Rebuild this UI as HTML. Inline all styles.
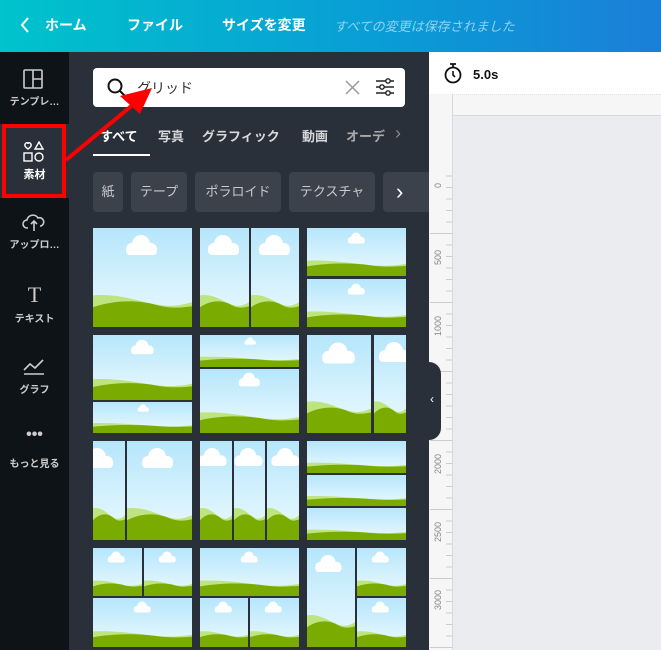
<!DOCTYPE html>
<html><head><meta charset="utf-8"><style>
*{margin:0;padding:0;box-sizing:border-box}
body{width:661px;height:650px;overflow:hidden;background:#ebecef;font-family:"Liberation Sans","Noto Sans CJK JP",sans-serif;position:relative}
.top{position:absolute;left:0;top:0;width:661px;height:52px;background:linear-gradient(90deg,#00c3cc,#0a9bd6 60%,#1b7fd8)}
.top span{position:absolute;top:15px;color:#fff;font-size:14px;font-weight:bold}
.side{position:absolute;left:0;top:52px;width:69px;height:598px;background:#0e1318}
.panel{position:absolute;left:69px;top:52px;width:360px;height:598px;background:#293039;overflow:hidden}
.si{position:absolute;left:0;width:69px;text-align:center;color:#fff;font-size:10px;font-weight:bold}
.a{position:absolute}
.t{position:absolute;top:126px;color:#d6d8db;font-size:13px;font-weight:bold}
.chip{position:absolute;top:172px;height:40px;background:#3b424c;border-radius:4px;color:#c7cacd;font-size:13px;line-height:40px;text-align:center}
svg.tile{position:absolute;display:block}
.rl{position:absolute;left:433px;font-size:9px;color:#888;writing-mode:vertical-rl;transform:rotate(180deg)}
</style></head><body>
<svg width="0" height="0" style="position:absolute"><defs>
<linearGradient id="sky" x1="0" y1="0" x2="0" y2="1"><stop offset="0" stop-color="#b6e6fb"/><stop offset="1" stop-color="#ecfaff"/></linearGradient>
<symbol id="land" viewBox="0 0 100 100" preserveAspectRatio="none">
<rect width="100" height="100" fill="url(#sky)"/>
<path d="M0 68 C30 66 50 76 70 78 C85 80 95 76 100 75 L100 100 L0 100Z" fill="#bde47e"/>
<path d="M0 80 C20 73 45 72 65 78 C80 82 92 80 100 79 L100 100 L0 100Z" fill="#7aab00"/>
</symbol>
<symbol id="cloud" viewBox="0 0 40 22"><circle cx="20" cy="10" r="9" fill="#fff"/><circle cx="11" cy="15" r="6" fill="#fff"/><circle cx="30" cy="15" r="6" fill="#fff"/><rect x="5" y="13" width="31" height="8" rx="4" fill="#fff"/></symbol>
</defs></svg>

<div class="top">
<svg class="a" style="left:20px;top:17px" width="10" height="16"><path d="M8 1L2 8l6 7" stroke="#fff" stroke-width="2" fill="none"/></svg>
<span style="left:45px">ホーム</span><span style="left:127px">ファイル</span><span style="left:222px">サイズを変更</span>
<span style="left:334px;font-weight:normal;color:#8fd3ee;font-style:italic;font-size:13px;top:16px">すべての変更は保存されました</span>
</div>

<div class="side"></div>
<div class="a" style="left:0;top:124px;width:69px;height:74px;background:#293039"></div>
<div class="panel"></div>

<svg class="a" style="left:23px;top:69px" width="20" height="20"><rect x="1" y="1" width="18" height="18" rx="1" fill="none" stroke="#ccc" stroke-width="1.6"/><path d="M10 1v18M10 10h9" stroke="#ccc" stroke-width="1.6"/></svg>
<div class="si" style="top:93px;color:#ccc">テンプレ…</div>
<svg class="a" style="left:22px;top:141px" width="24" height="22"><path d="M6 8C3 6 2 4 3.5 2.5 5 1 6 2 6 3 6 2 7 1 8.5 2.5 10 4 9 6 6 8Z" fill="none" stroke="#fff" stroke-width="1.4"/><path d="M17 1l4 7h-8z" fill="none" stroke="#fff" stroke-width="1.4"/><rect x="2" y="12" width="8" height="8" fill="none" stroke="#fff" stroke-width="1.4"/><circle cx="17" cy="16" r="4" fill="none" stroke="#fff" stroke-width="1.4"/></svg>
<div class="si" style="top:166px;font-size:11px">素材</div>
<div class="a" style="left:2px;top:124px;width:64px;height:74px;border:4px solid #f00"></div>
<svg class="a" style="left:22px;top:212px" width="24" height="20"><path d="M6 16H5a4 4 0 010-8 6 6 0 0111-2 4 4 0 013 8h-1M12 9v10M9 12l3-3 3 3" fill="none" stroke="#ccc" stroke-width="1.6"/></svg>
<div class="si" style="top:236px;color:#ccc">アップロ…</div>
<div class="si" style="top:282px;font-size:22px;font-weight:normal;font-family:'Liberation Serif',serif;color:#ccc">T</div>
<div class="si" style="top:310px;color:#ccc">テキスト</div>
<svg class="a" style="left:23px;top:357px" width="22" height="18"><path d="M1 13l6-6 5 4 8-8M1 17h20" fill="none" stroke="#ccc" stroke-width="1.6"/></svg>
<div class="si" style="top:381px;color:#ccc">グラフ</div>
<div class="si" style="top:426px;font-size:16px;color:#ccc">•••</div>
<div class="si" style="top:455px;color:#ccc">もっと見る</div>

<div class="a" style="left:93px;top:68px;width:312px;height:39px;background:#fff;border-radius:4px"></div>
<svg class="a" style="left:107px;top:78px" width="20" height="20"><circle cx="8" cy="8" r="6.5" fill="none" stroke="#111" stroke-width="2"/><path d="M13 13l5 5" stroke="#111" stroke-width="2"/></svg>
<div class="a" style="left:137px;top:78px;font-size:14px;color:#333">グリッド</div>
<svg class="a" style="left:345px;top:80px" width="15" height="15"><path d="M1 1l13 13M14 1L1 14" stroke="#999" stroke-width="1.5"/></svg>
<svg class="a" style="left:375px;top:77px" width="20" height="20"><path d="M1 4h18M1 10h18M1 16h18" stroke="#222" stroke-width="1.6"/><circle cx="13" cy="4" r="2.2" fill="#fff" stroke="#222" stroke-width="1.4"/><circle cx="7" cy="10" r="2.2" fill="#fff" stroke="#222" stroke-width="1.4"/><circle cx="13" cy="16" r="2.2" fill="#fff" stroke="#222" stroke-width="1.4"/></svg>

<div class="t" style="left:100px;color:#fff">すべて</div>
<div class="t" style="left:158px">写真</div>
<div class="t" style="left:202px">グラフィック</div>
<div class="t" style="left:302px">動画</div>
<div class="t" style="left:346px;color:#aaa">オーデ</div>
<div class="t" style="left:395px;top:123px;color:#888;font-size:18px;font-weight:normal">›</div>
<div class="a" style="left:93px;top:154px;width:57px;height:2px;background:#fff"></div>

<div class="chip" style="left:93px;width:30px">紙</div>
<div class="chip" style="left:131px;width:56px">テープ</div>
<div class="chip" style="left:195px;width:86px">ポラロイド</div>
<div class="chip" style="left:289px;width:86px">テクスチャ</div>
<div class="chip" style="left:383px;width:46px;border-radius:4px 0 0 4px;text-align:left;padding-left:13px;color:#fff;font-size:22px">›</div>

<svg class="tile" style="left:93px;top:228px" width="99" height="99"><use href="#land" width="99" height="99"/><use href="#cloud" x="28" y="6" width="40" height="22"/></svg>
<svg class="tile" style="left:200px;top:228px" width="49" height="99"><use href="#land" width="49" height="99"/><use href="#cloud" x="3" y="6" width="40" height="22"/></svg>
<svg class="tile" style="left:251px;top:228px" width="48" height="99"><use href="#land" width="48" height="99"/><use href="#cloud" x="3" y="6" width="40" height="22"/></svg>
<svg class="tile" style="left:307px;top:228px" width="99" height="48"><use href="#land" width="99" height="48"/><use href="#cloud" x="38" y="4" width="22" height="12"/></svg>
<svg class="tile" style="left:307px;top:279px" width="99" height="48"><use href="#land" width="99" height="48"/><use href="#cloud" x="38" y="4" width="22" height="12"/></svg>

<svg class="tile" style="left:93px;top:335px" width="99" height="65"><use href="#land" width="99" height="65"/><use href="#cloud" x="34" y="4" width="30" height="16"/></svg>
<svg class="tile" style="left:93px;top:402px" width="99" height="31"><use href="#land" width="99" height="31"/><use href="#cloud" x="42" y="2" width="16" height="8"/></svg>
<svg class="tile" style="left:200px;top:335px" width="99" height="32"><use href="#land" width="99" height="32"/><use href="#cloud" x="42" y="2" width="16" height="8"/></svg>
<svg class="tile" style="left:200px;top:369px" width="99" height="64"><use href="#land" width="99" height="64"/><use href="#cloud" x="35" y="3" width="28" height="15"/></svg>
<svg class="tile" style="left:307px;top:335px" width="64" height="98"><use href="#land" width="64" height="98"/><use href="#cloud" x="10" y="6" width="42" height="24"/></svg>
<svg class="tile" style="left:374px;top:335px" width="32" height="98"><use href="#land" width="32" height="98"/><use href="#cloud" x="0" y="6" width="40" height="22"/></svg>

<svg class="tile" style="left:93px;top:441px" width="32" height="99"><use href="#land" width="32" height="99"/><use href="#cloud" x="-16" y="6" width="40" height="22"/></svg>
<svg class="tile" style="left:127px;top:441px" width="65" height="99"><use href="#land" width="65" height="99"/><use href="#cloud" x="10" y="6" width="40" height="22"/></svg>
<svg class="tile" style="left:200px;top:441px" width="32" height="99"><use href="#land" width="32" height="99"/><use href="#cloud" x="-6" y="6" width="36" height="20"/></svg>
<svg class="tile" style="left:234px;top:441px" width="31" height="99"><use href="#land" width="31" height="99"/><use href="#cloud" x="-4" y="6" width="36" height="20"/></svg>
<svg class="tile" style="left:267px;top:441px" width="32" height="99"><use href="#land" width="32" height="99"/><use href="#cloud" x="0" y="6" width="36" height="20"/></svg>
<svg class="tile" style="left:307px;top:441px" width="99" height="32"><use href="#land" width="99" height="32"/></svg>
<svg class="tile" style="left:307px;top:475px" width="99" height="31"><use href="#land" width="99" height="31"/></svg>
<svg class="tile" style="left:307px;top:508px" width="99" height="32"><use href="#land" width="99" height="32"/></svg>

<svg class="tile" style="left:93px;top:548px" width="49" height="48"><use href="#land" width="49" height="48"/><use href="#cloud" x="12" y="3" width="22" height="12"/></svg>
<svg class="tile" style="left:144px;top:548px" width="48" height="48"><use href="#land" width="48" height="48"/><use href="#cloud" x="12" y="3" width="22" height="12"/></svg>
<svg class="tile" style="left:93px;top:598px" width="99" height="49"><use href="#land" width="99" height="49"/><use href="#cloud" x="38" y="3" width="22" height="12"/></svg>
<svg class="tile" style="left:200px;top:548px" width="99" height="48"><use href="#land" width="99" height="48"/><use href="#cloud" x="38" y="3" width="22" height="12"/></svg>
<svg class="tile" style="left:200px;top:598px" width="48" height="49"><use href="#land" width="48" height="49"/><use href="#cloud" x="12" y="3" width="22" height="12"/></svg>
<svg class="tile" style="left:250px;top:598px" width="49" height="49"><use href="#land" width="49" height="49"/><use href="#cloud" x="12" y="3" width="22" height="12"/></svg>
<svg class="tile" style="left:307px;top:548px" width="48" height="99"><use href="#land" width="48" height="99"/><use href="#cloud" x="4" y="6" width="34" height="19"/></svg>
<svg class="tile" style="left:357px;top:548px" width="49" height="48"><use href="#land" width="49" height="48"/><use href="#cloud" x="12" y="3" width="22" height="12"/></svg>
<svg class="tile" style="left:357px;top:598px" width="49" height="49"><use href="#land" width="49" height="49"/><use href="#cloud" x="12" y="3" width="22" height="12"/></svg>

<svg class="a" style="left:0;top:0" width="200" height="200"><path d="M66 160L135 103" stroke="#f00" stroke-width="4"/><path d="M152 88L120 96L140 114Z" fill="#f00"/></svg>

<div class="a" style="left:429px;top:52px;width:232px;height:42px;background:#fff"></div>
<svg class="a" style="left:443px;top:62px" width="20" height="22"><path d="M7 2h6M10 2v3" stroke="#111" stroke-width="1.8"/><circle cx="10" cy="13" r="7.5" fill="none" stroke="#111" stroke-width="1.8"/><path d="M10 9v4l2 2" stroke="#111" stroke-width="1.6" fill="none"/></svg>
<div class="a" style="left:473px;top:67px;font-size:13px;font-weight:bold;color:#111">5.0s</div>
<div class="a" style="left:429px;top:94px;width:232px;height:22px;background:#f6f6f7;border-bottom:1px solid #d8d9db;border-top:1px dotted #dde"></div>
<div class="a" style="left:429px;top:94px;width:24px;height:556px;background:#f6f6f7;border-right:1px solid #d8d9db"></div>
<div class="a" style="left:430px;top:165px;width:22px;height:485px;background:repeating-linear-gradient(180deg,transparent 0,transparent 68px,#ccc 68px,#ccc 69px)"></div>
<div class="a" style="left:446px;top:165px;width:6px;height:485px;background:repeating-linear-gradient(180deg,transparent 0,transparent 10.5px,#ccc 10.5px,#ccc 11.5px)"></div>
<div class="rl" style="top:183px">0</div>
<div class="rl" style="top:250px">500</div>
<div class="rl" style="top:316px">1000</div>
<div class="rl" style="top:385px">1500</div>
<div class="rl" style="top:454px">2000</div>
<div class="rl" style="top:522px">2500</div>
<div class="rl" style="top:590px">3000</div>
<div class="a" style="left:427px;top:362px;width:14px;height:78px;background:#293039;border-radius:0 12px 12px 0"></div>
<div class="a" style="left:430px;top:392px;color:#fff;font-size:12px">‹</div>
</body></html>
